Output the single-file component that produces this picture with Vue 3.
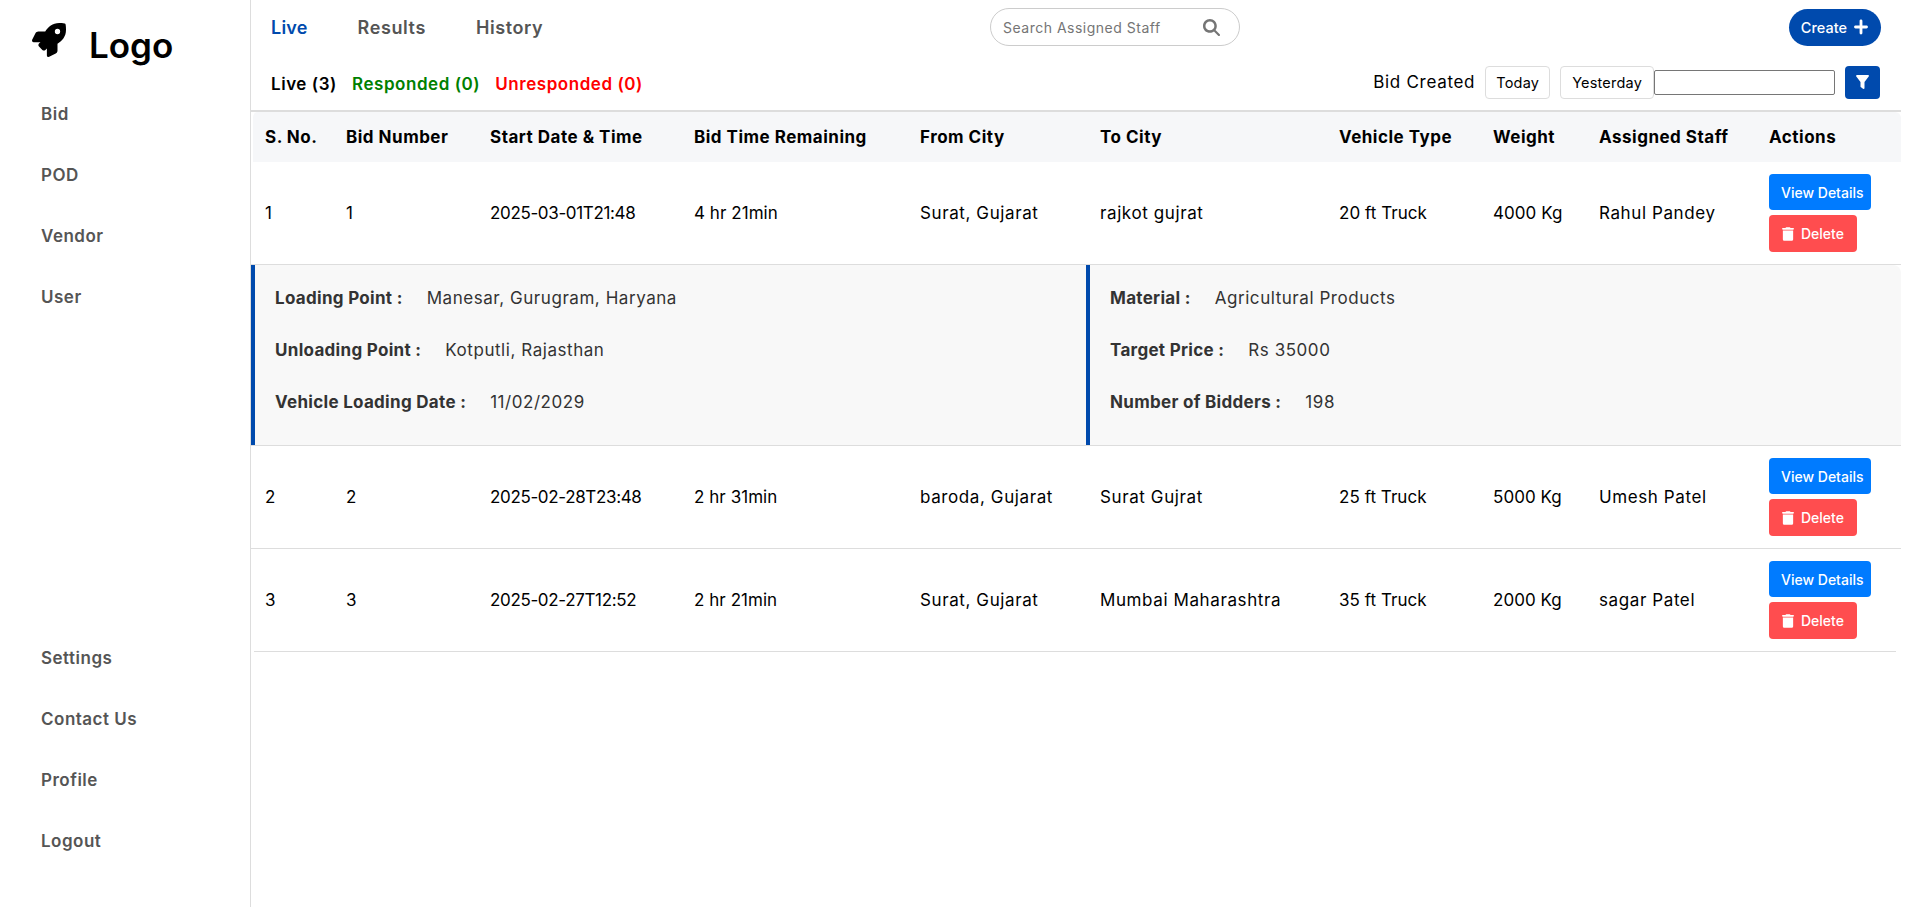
<template>
  <div class="page">
    <aside class="sidebar">
      <div class="logo">
        <svg class="rocket" viewBox="0 0 512 512" width="34" height="34">
          <path d="M505.12 19.09c-1.19-5.53-6.66-11-12.21-12.18C460.72 0 435.51 0 410.41 0 307.18 0 245.27 55.2 199.05 128H94.84c-16.35.02-35.56 11.88-42.89 26.48L2.52 253.3A28.4 28.4 0 0 0 0 264a24 24 0 0 0 24 24h103.81l-22.47 22.47c-11.37 11.36-13 32.26 0 45.25l50.9 50.9c11.16 11.19 32.16 13.16 45.28 0L224 384.16V488a24 24 0 0 0 24 24 28.56 28.56 0 0 0 10.71-2.52l98.73-49.39c14.63-7.3 26.51-26.5 26.51-42.86V312.8c72.6-46.31 128.03-108.41 128.03-211.09.02-25.2.02-50.4-6.86-82.62zM384.04 168A40 40 0 1 1 424.05 128a40.02 40.02 0 0 1-40.01 40z"/>
        </svg>
        <span class="logo-text">Logo</span>
      </div>
      <nav class="nav">
        <a v-for="item in topLinks" :key="item" class="nav-link">{{ item }}</a>
      </nav>
      <nav class="nav nav-bottom">
        <a v-for="item in bottomLinks" :key="item" class="nav-link">{{ item }}</a>
      </nav>
    </aside>

    <main class="main">
      <div class="topbar">
        <div class="tabs">
          <span class="tab active">Live</span>
          <span class="tab">Results</span>
          <span class="tab">History</span>
        </div>
        <div class="search">
          <span class="search-text">Search Assigned Staff</span>
          <svg viewBox="0 0 512 512" width="17" height="17" fill="#757575">
            <path d="M416 208c0 46-15 88-40 123l127 126c12 13 12 33 0 46s-33 12-46 0L331 376c-35 25-77 40-123 40C93 416 0 323 0 208S93 0 208 0s208 93 208 208zM208 342a134 134 0 1 0 0-268 134 134 0 1 0 0 268z"/>
          </svg>
        </div>
        <button class="create">Create
          <svg viewBox="0 0 448 512" width="14" height="16" fill="#fff">
            <path d="M269 64c0-25-20-45-45-45s-45 20-45 45v147H48c-25 0-45 20-45 45s20 45 45 45h131v147c0 25 20 45 45 45s45-20 45-45V301h131c25 0 45-20 45-45s-20-45-45-45H269V64z"/>
          </svg>
        </button>
      </div>

      <div class="filterbar">
        <div class="counts">
          <span class="count">Live (3)</span>
          <span class="count green">Responded (0)</span>
          <span class="count red">Unresponded (0)</span>
        </div>
        <div class="filters">
          <span class="bid-created">Bid Created</span>
          <button class="chip">Today</button>
          <button class="chip">Yesterday</button>
          <input class="date" type="text" />
          <button class="funnel">
            <svg viewBox="0 0 13 14" width="13" height="14" fill="#fff">
              <path d="M1 0h11c.8 0 1.2.9.7 1.5L8.5 7v6c0 .8-.9 1.2-1.5.7L5 12.3c-.3-.2-.5-.5-.5-.8V7L.3 1.5C-.2.9.2 0 1 0z"/>
            </svg>
          </button>
        </div>
      </div>

      <table class="bids">
        <colgroup>
          <col v-for="w in colWidths" :key="w.id" :style="{ width: w.px + 'px' }" />
        </colgroup>
        <thead>
          <tr>
            <th v-for="h in headers" :key="h">{{ h }}</th>
          </tr>
        </thead>
        <tbody>
          <template v-for="(row, i) in rows" :key="row.no">
            <tr class="row">
              <td>{{ row.no }}</td>
              <td>{{ row.no }}</td>
              <td class="date-cell">{{ row.start }}</td>
              <td class="num">{{ row.left }}</td>
              <td>{{ row.from }}</td>
              <td>{{ row.to }}</td>
              <td class="num">{{ row.vehicle }}</td>
              <td class="num">{{ row.weight }}</td>
              <td>{{ row.staff }}</td>
              <td class="actions">
                <button class="btn view">View Details</button>
                <button class="btn del">
                  <svg viewBox="0 0 448 512" width="12" height="14" fill="#fff">
                    <path d="M135 18C140 7 151 0 163 0h122c12 0 23 7 28 18l7 14h96c18 0 32 14 32 32s-14 32-32 32H32C14 96 0 82 0 64s14-32 32-32h96l7-14zM32 128h384v320c0 35-29 64-64 64H96c-35 0-64-29-64-64V128z"/>
                  </svg>
                  Delete
                </button>
              </td>
            </tr>
            <tr v-if="i === 0" class="detail-row">
              <td colspan="10" class="detail-cell">
                <div class="detail">
                  <div class="detail-col left-col">
                    <p v-for="d in detailLeft" :key="d.label"><b>{{ d.label }} :</b><span>{{ d.value }}</span></p>
                  </div>
                  <div class="detail-col">
                    <p v-for="d in detailRight" :key="d.label"><b>{{ d.label }} :</b><span>{{ d.value }}</span></p>
                  </div>
                </div>
              </td>
            </tr>
          </template>
        </tbody>
      </table>
      <div class="table-end"></div>
    </main>
  </div>
</template>

<script setup>
const topLinks = ['Bid', 'POD', 'Vendor', 'User']
const bottomLinks = ['Settings', 'Contact Us', 'Profile', 'Logout']

const headers = ['S. No.', 'Bid Number', 'Start Date & Time', 'Bid Time Remaining', 'From City', 'To City', 'Vehicle Type', 'Weight', 'Assigned Staff', 'Actions']
const colWidths = [83, 144, 204, 226, 180, 239, 154, 106, 170, 144].map((px, id) => ({ id, px }))

const rows = [
  { no: 1, start: '2025-03-01T21:48', left: '4 hr 21min', from: 'Surat, Gujarat', to: 'rajkot gujrat', vehicle: '20 ft Truck', weight: '4000 Kg', staff: 'Rahul Pandey' },
  { no: 2, start: '2025-02-28T23:48', left: '2 hr 31min', from: 'baroda, Gujarat', to: 'Surat Gujrat', vehicle: '25 ft Truck', weight: '5000 Kg', staff: 'Umesh Patel' },
  { no: 3, start: '2025-02-27T12:52', left: '2 hr 21min', from: 'Surat, Gujarat', to: 'Mumbai Maharashtra', vehicle: '35 ft Truck', weight: '2000 Kg', staff: 'sagar Patel' },
]

const detailLeft = [
  { label: 'Loading Point', value: 'Manesar, Gurugram, Haryana' },
  { label: 'Unloading Point', value: 'Kotputli, Rajasthan' },
  { label: 'Vehicle Loading Date', value: '11/02/2029' },
]
const detailRight = [
  { label: 'Material', value: 'Agricultural Products' },
  { label: 'Target Price', value: 'Rs 35000' },
  { label: 'Number of Bidders', value: '198' },
]
</script>

<style>
body {
  margin: 0;
  background: #fff;
}
</style>

<style scoped>
.page {
  display: flex;
  height: 907px;
  overflow: hidden;
  font-family: Inter, "Open Sans", sans-serif;
  color: #000;
}

.sidebar {
  width: 250px;
  flex-shrink: 0;
  border-right: 1px solid #ddd;
  display: flex;
  flex-direction: column;
}

.logo {
  display: flex;
  align-items: center;
  gap: 23px;
  padding: 23px 0 0 32px;
  height: 34px;
}

.logo-text {
  font-size: 35px;
  font-weight: 600;
  padding-top: 10px;
}

.nav {
  display: flex;
  flex-direction: column;
  gap: 37px;
  padding: 45px 0 0 41px;
}

.nav-bottom {
  margin-top: auto;
  padding: 0 0 54px 41px;
}

.nav-link {
  font-size: 17px;
  letter-spacing: 0.5px;
  line-height: 24px;
  font-weight: 600;
  color: #555;
}

.main {
  flex: 1;
  min-width: 0;
}

.topbar {
  display: flex;
  align-items: center;
  height: 54px;
  padding: 0 34px 0 20px;
}

.tabs {
  display: flex;
  gap: 50px;
  width: 719px;
}

.tab {
  font-size: 18px;
  letter-spacing: 0.6px;
  font-weight: 600;
  color: #555;
}

.tab.active {
  color: #004aad;
  letter-spacing: 0.2px;
}

.search {
  width: 250px;
  height: 38px;
  box-sizing: border-box;
  border: 1px solid #ccc;
  border-radius: 19px;
  display: flex;
  align-items: center;
  justify-content: space-between;
  padding: 0 19px 0 12px;
}

.search-text {
  font-size: 14px;
  letter-spacing: 0.5px;
  color: #757575;
}

.create {
  margin-left: auto;
  display: flex;
  align-items: center;
  gap: 7px;
  height: 37px;
  padding: 0 13px 0 12px;
  border: none;
  border-radius: 19px;
  background: #004aad;
  color: #fff;
  font: 500 14.5px Inter, sans-serif;
}

.filterbar {
  display: flex;
  align-items: center;
  justify-content: space-between;
  height: 56px;
  margin-right: 14px;
  padding: 0 21px 0 20px;
  border-bottom: 2px solid #ddd;
}

.counts {
  display: flex;
  gap: 15px;
  padding-top: 4px;
}

.count {
  font-size: 17px;
  letter-spacing: 0.55px;
  font-weight: 600;
}

.green {
  color: #008000;
}

.red {
  color: #f00;
}

.filters {
  display: flex;
  align-items: center;
}

.bid-created {
  font-size: 17px;
  letter-spacing: 0.7px;
  margin-right: 10px;
}

.chip {
  height: 33px;
  padding: 0 10px;
  margin-right: 10px;
  background: #fff;
  border: 1px solid #ddd;
  border-radius: 4px;
  font: 14.5px Inter, sans-serif;
  letter-spacing: 0.2px;
  color: #000;
}

.chip:nth-of-type(2) {
  margin-right: 0;
  padding: 0 11px;
}

.date {
  width: 181px;
  height: 25px;
  box-sizing: border-box;
  border: 1px solid #767676;
  border-radius: 2px;
  padding: 0;
  margin-right: 10px;
}

.funnel {
  width: 35px;
  height: 33px;
  border: none;
  border-radius: 4px;
  background: #004aad;
  display: flex;
  align-items: center;
  justify-content: center;
  padding: 0;
}

.bids {
  width: 1650px;
  table-layout: fixed;
  border-collapse: separate;
  border-spacing: 0;
}

th {
  height: 50px;
  padding: 0 12px;
  text-align: left;
  font-weight: 700;
  font-size: 17px;
  letter-spacing: 0.5px;
  background: #f6f7f9;
}

th:first-child {
  padding-left: 12px;
  border-left: 2px solid #fff;
  border-top-left-radius: 6px;
}

th:last-child {
  border-top-right-radius: 6px;
}

.row td {
  height: 102px;
  padding: 0 12px;
  border-bottom: 1px solid #ddd;
  font-size: 17px;
  letter-spacing: 0.6px;
}

.row td:first-child {
  padding-left: 14px;
}

.row:last-child td {
  border-bottom: none;
}

.row .date-cell {
  letter-spacing: -0.35px;
}

.row .num {
  letter-spacing: 0.05px;
}

.btn {
  display: flex;
  align-items: center;
  border: none;
  border-radius: 4px;
  color: #fff;
  font: 500 14px Inter, sans-serif;
  letter-spacing: 0;
  white-space: nowrap;
}

.view {
  width: 102px;
  height: 36px;
  padding: 0 0 0 12px;
  background: #007bff;
  margin-bottom: 5px;
}

.del {
  width: 88px;
  height: 37px;
  gap: 7px;
  padding: 0 0 0 13px;
  background: #ff4d4f;
}

.detail-cell {
  padding: 0;
  border-bottom: 1px solid #ddd;
}

.detail {
  display: flex;
  height: 180px;
  background: #f8f8f8;
  border-top-right-radius: 8px;
}

.detail-col {
  flex: 1;
  box-sizing: border-box;
  border-left: 4px solid #004aad;
  padding: 7px 20px 0;
}

.left-col {
  flex: none;
  width: 835px;
}

.detail-col p {
  margin: 0;
  height: 52px;
  display: flex;
  align-items: center;
  gap: 24px;
  font-size: 17px;
  letter-spacing: 0.55px;
  color: #333;
}

.detail-col b {
  font-weight: 700;
  letter-spacing: 0.3px;
}

.table-end {
  width: 1642px;
  margin-left: 3px;
  border-top: 1px solid #ddd;
}
</style>
